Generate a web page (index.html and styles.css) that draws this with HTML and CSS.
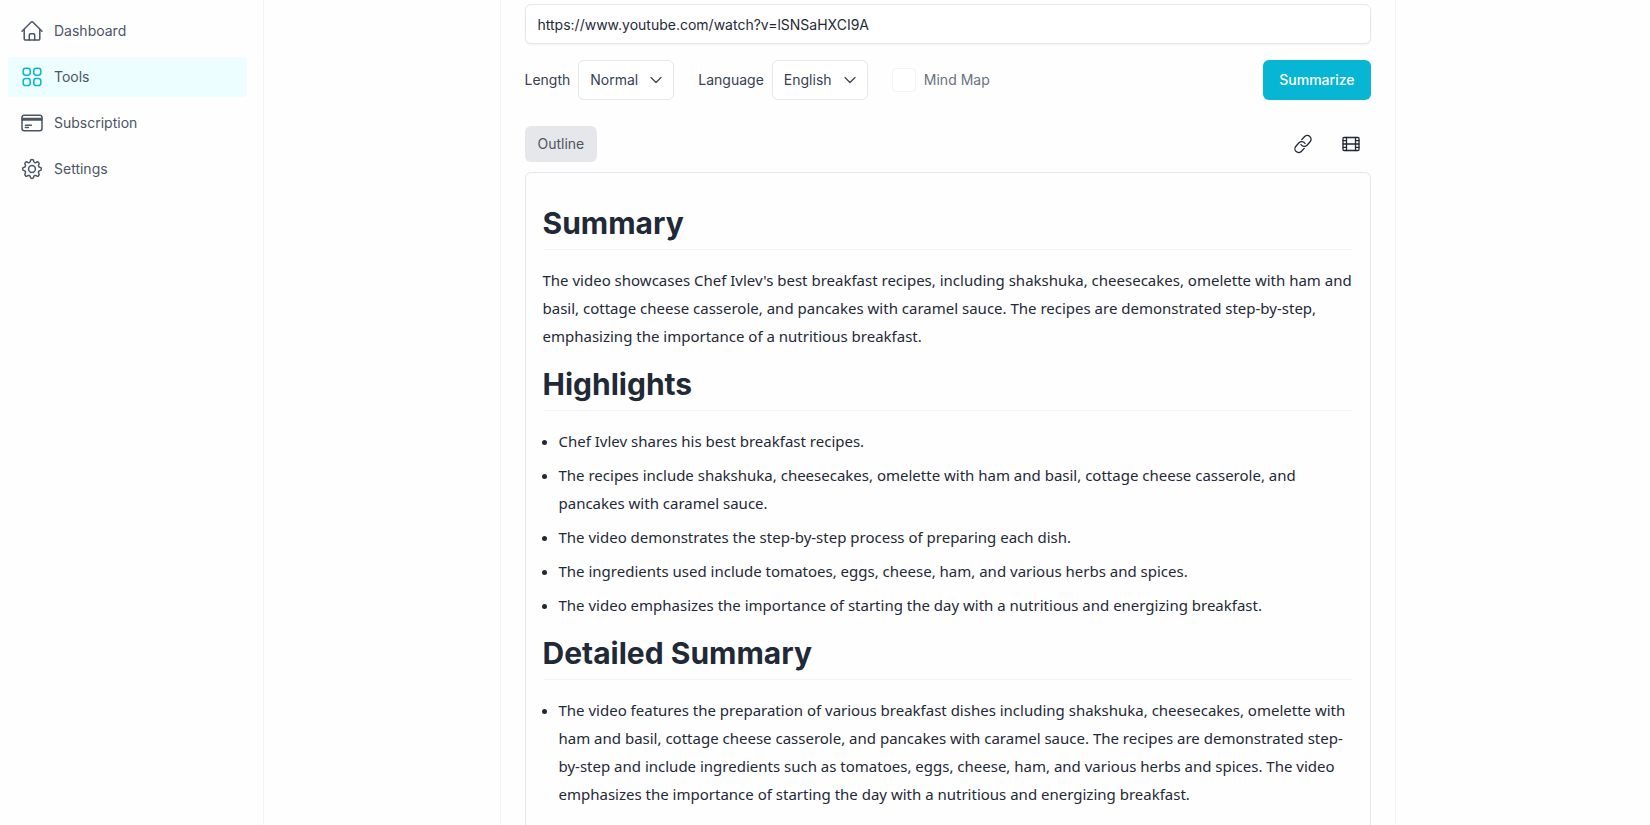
FILE: index.html
```html
<!DOCTYPE html>
<html lang="en">
<head>
    <meta charset="UTF-8">
    <meta name="viewport" content="width=device-width, initial-scale=1.0">
    <title>Tools</title>
    <link rel="stylesheet" href="styles.css">
</head>
<body>
    <div class="app">
        <nav class="sidebar">
            <a class="nav-item" href="#">
                <svg class="nav-icon" viewBox="0 0 24 24">
                    <path d="M2 12.2 11 3.2a1.4 1.4 0 0 1 2 0l9 9"/>
                    <path d="M4.2 10.2v9.6a1.2 1.2 0 0 0 1.2 1.2h13.2a1.2 1.2 0 0 0 1.2-1.2v-9.6"/>
                    <path d="M9.3 21v-5a1.2 1.2 0 0 1 1.2-1.2h3a1.2 1.2 0 0 1 1.2 1.2v5"/>
                </svg>
                <span>Dashboard</span>
            </a>
            <a class="nav-item active" href="#">
                <svg class="nav-icon" viewBox="0 0 24 24">
                    <rect x="3.2" y="3.2" width="7" height="7" rx="2.4"/>
                    <rect x="13.8" y="3.2" width="7" height="7" rx="2.4"/>
                    <rect x="3.2" y="13.6" width="7" height="7" rx="2.4"/>
                    <rect x="13.8" y="13.6" width="7" height="7" rx="2.4"/>
                </svg>
                <span>Tools</span>
            </a>
            <a class="nav-item" href="#">
                <svg class="nav-icon" viewBox="0 0 24 24">
                    <rect x="2" y="4.2" width="20" height="15.6" rx="2.2"/>
                    <path d="M2 7.4h20M2 9h20M5.4 14.2h6M5.4 16.6h3"/>
                </svg>
                <span>Subscription</span>
            </a>
            <a class="nav-item" href="#">
                <svg class="nav-icon" viewBox="0 0 24 24">
                    <circle cx="12" cy="12" r="3.4"/>
                    <path d="M10.3 4.3a1.7 1.7 0 0 1 3.4 0a1.7 1.7 0 0 0 2.6 1.1a1.7 1.7 0 0 1 2.4 2.4a1.7 1.7 0 0 0 1 2.5a1.7 1.7 0 0 1 0 3.4a1.7 1.7 0 0 0-1 2.6a1.7 1.7 0 0 1-2.4 2.4a1.7 1.7 0 0 0-2.6 1a1.7 1.7 0 0 1-3.4 0a1.7 1.7 0 0 0-2.6-1a1.7 1.7 0 0 1-2.4-2.4a1.7 1.7 0 0 0-1-2.6a1.7 1.7 0 0 1 0-3.4a1.7 1.7 0 0 0 1-2.5a1.7 1.7 0 0 1 2.4-2.4a1.7 1.7 0 0 0 2.6-1.1z"/>
                </svg>
                <span>Settings</span>
            </a>
        </nav>

        <main class="content">
            <div class="column">
                <input class="url-input" type="text" aria-label="Video URL" value="https://www.youtube.com/watch?v=lSNSaHXCI9A">

                <div class="options">
                    <div class="field">
                        <label for="length">Length</label>
                        <div class="select-wrap">
                            <select id="length">
                                <option>Normal</option>
                            </select>
                            <svg class="chevron" viewBox="0 0 16 16"><path d="m3 5.5 5 5 5-5"/></svg>
                        </div>
                    </div>
                    <div class="field">
                        <label for="language">Language</label>
                        <div class="select-wrap">
                            <select id="language">
                                <option>English</option>
                            </select>
                            <svg class="chevron" viewBox="0 0 16 16"><path d="m3 5.5 5 5 5-5"/></svg>
                        </div>
                    </div>
                    <div class="field mind-map">
                        <input type="checkbox" id="mind-map">
                        <label for="mind-map">Mind Map</label>
                    </div>
                    <button class="summarize-btn">Summarize</button>
                </div>

                <div class="toolbar">
                    <button class="tab">Outline</button>
                    <div class="actions">
                        <button class="icon-btn" aria-label="Copy link">
                            <svg viewBox="0 0 20 20">
                                <g transform="rotate(-48 10 10)">
                                    <path d="M7.6 13.8H3.6a3.8 3.8 0 0 1 0-7.6h4.6a3.8 3.8 0 0 1 3.6 5"/>
                                    <path d="M12.4 6.2h4a3.8 3.8 0 0 1 0 7.6h-4.6a3.8 3.8 0 0 1-3.6-5"/>
                                </g>
                            </svg>
                        </button>
                        <button class="icon-btn" aria-label="Video">
                            <svg viewBox="0 0 20 20">
                                <rect x="2" y="3.5" width="16" height="13" rx="1"/>
                                <path d="M5.5 3.5v13M14.5 3.5v13M5.5 10h9M2 6.7h3.5M2 10h3.5M2 13.3h3.5M14.5 6.7H18M14.5 10H18M14.5 13.3H18"/>
                            </svg>
                        </button>
                    </div>
                </div>

                <article class="outline">
                    <h1>Summary</h1>
                    <p>The video showcases Chef Ivlev's best breakfast recipes, including shakshuka, cheesecakes, omelette with ham and basil, cottage cheese casserole, and pancakes with caramel sauce. The recipes are demonstrated step-by-step, emphasizing the importance of a nutritious breakfast.</p>
                    <h1>Highlights</h1>
                    <ul>
                        <li>Chef Ivlev shares his best breakfast recipes.</li>
                        <li>The recipes include shakshuka, cheesecakes, omelette with ham and basil, cottage cheese casserole, and pancakes with caramel sauce.</li>
                        <li>The video demonstrates the step-by-step process of preparing each dish.</li>
                        <li>The ingredients used include tomatoes, eggs, cheese, ham, and various herbs and spices.</li>
                        <li>The video emphasizes the importance of starting the day with a nutritious and energizing breakfast.</li>
                    </ul>
                    <h1>Detailed Summary</h1>
                    <ul>
                        <li>The video features the preparation of various breakfast dishes including shakshuka, cheesecakes, omelette with ham and basil, cottage cheese casserole, and pancakes with caramel sauce. The recipes are demonstrated step-by-step and include ingredients such as tomatoes, eggs, cheese, ham, and various herbs and spices. The video emphasizes the importance of starting the day with a nutritious and energizing breakfast.</li>
                    </ul>
                </article>
            </div>
        </main>
    </div>
</body>
</html>
```

FILE: styles.css
```css
* {
    box-sizing: border-box;
}

body {
    margin: 0;
    font-family: Inter, sans-serif;
    font-size: 14px;
    line-height: 20px;
    color: #1f2937;
    background: #fefefe;
}

button, input, select {
    font: inherit;
    color: inherit;
}

svg {
    fill: none;
    stroke: currentColor;
    stroke-linecap: round;
    stroke-linejoin: round;
}

.app {
    display: flex;
    height: 100vh;
    overflow: hidden;
}

.sidebar {
    display: flex;
    flex-direction: column;
    gap: 6px;
    width: 264px;
    flex-shrink: 0;
    padding: 11px 16px 0 8px;
    border-right: 1px solid #f3f4f6;
}

.nav-item {
    display: flex;
    align-items: center;
    gap: 10px;
    height: 40px;
    padding: 0 12px;
    border-radius: 4px;
    color: #4b5563;
    text-decoration: none;
}

.nav-item.active {
    background: #ecfeff;
}

.nav-icon {
    width: 24px;
    height: 24px;
    stroke-width: 1.5;
}

.active .nav-icon {
    color: #06b6d4;
}

.content {
    flex: 1;
    display: flex;
    justify-content: center;
    padding-right: 19px;
}

.column {
    display: flex;
    flex-direction: column;
    width: 100%;
    max-width: 896px;
    padding: 4px 24px 0;
    border: 1px solid #f3f4f6;
    border-width: 0 1px;
}

.url-input {
    height: 40px;
    flex-shrink: 0;
    padding: 0 12px;
    border: 1px solid #e5e7eb;
    border-radius: 6px;
    background: #fff;
    box-shadow: 0 1px 2px rgba(0, 0, 0, 0.05);
}

.options {
    display: flex;
    align-items: center;
    gap: 24px;
    margin-top: 16px;
    color: #374151;
}

.field {
    display: flex;
    align-items: center;
    gap: 8px;
}

.select-wrap {
    position: relative;
}

.select-wrap select {
    appearance: none;
    height: 40px;
    padding: 0 35px 0 11px;
    border: 1px solid #e5e7eb;
    border-radius: 6px;
    background: #fff;
}

.chevron {
    position: absolute;
    top: 12px;
    right: 10px;
    width: 16px;
    height: 16px;
    stroke-width: 1.2;
    pointer-events: none;
}

.mind-map {
    color: #6b7280;
}

.mind-map input {
    appearance: none;
    width: 24px;
    height: 24px;
    margin: 0;
    border: 1px solid #f3f4f6;
    border-radius: 4px;
    background: #fff;
}

.summarize-btn {
    height: 40px;
    margin-left: auto;
    padding: 0 16px;
    border: none;
    border-radius: 6px;
    background: #06b6d4;
    color: #fff;
    font-weight: 500;
}

.toolbar {
    display: flex;
    align-items: center;
    justify-content: space-between;
    margin-top: 26px;
}

.tab {
    height: 36px;
    padding: 0 13px;
    border: none;
    border-radius: 6px;
    background: #e5e7eb;
    color: #4b5563;
}

.actions {
    display: flex;
    gap: 8px;
}

.icon-btn {
    display: flex;
    align-items: center;
    justify-content: center;
    width: 40px;
    height: 36px;
    padding: 0;
    border: none;
    background: none;
}

.icon-btn svg {
    width: 20px;
    height: 20px;
    stroke-width: 1.3;
}

.outline {
    flex: 1 0 auto;
    margin-top: 10px;
    padding: 16px 17px;
    border: 1px solid #e5e7eb;
    border-bottom: none;
    border-radius: 6px 6px 0 0;
    font-family: "Noto Sans", sans-serif;
    font-size: 15px;
    line-height: 28px;
}

.outline h1 {
    margin: 16px 0;
    padding-bottom: 8px;
    border-bottom: 1px solid #f3f4f6;
    font-family: Inter, sans-serif;
    font-size: 30px;
    font-weight: 700;
    line-height: 36px;
}

.outline p {
    margin: 0;
}

.outline ul {
    margin: 0;
    padding-left: 16px;
}

.outline li + li {
    margin-top: 6px;
}
```
